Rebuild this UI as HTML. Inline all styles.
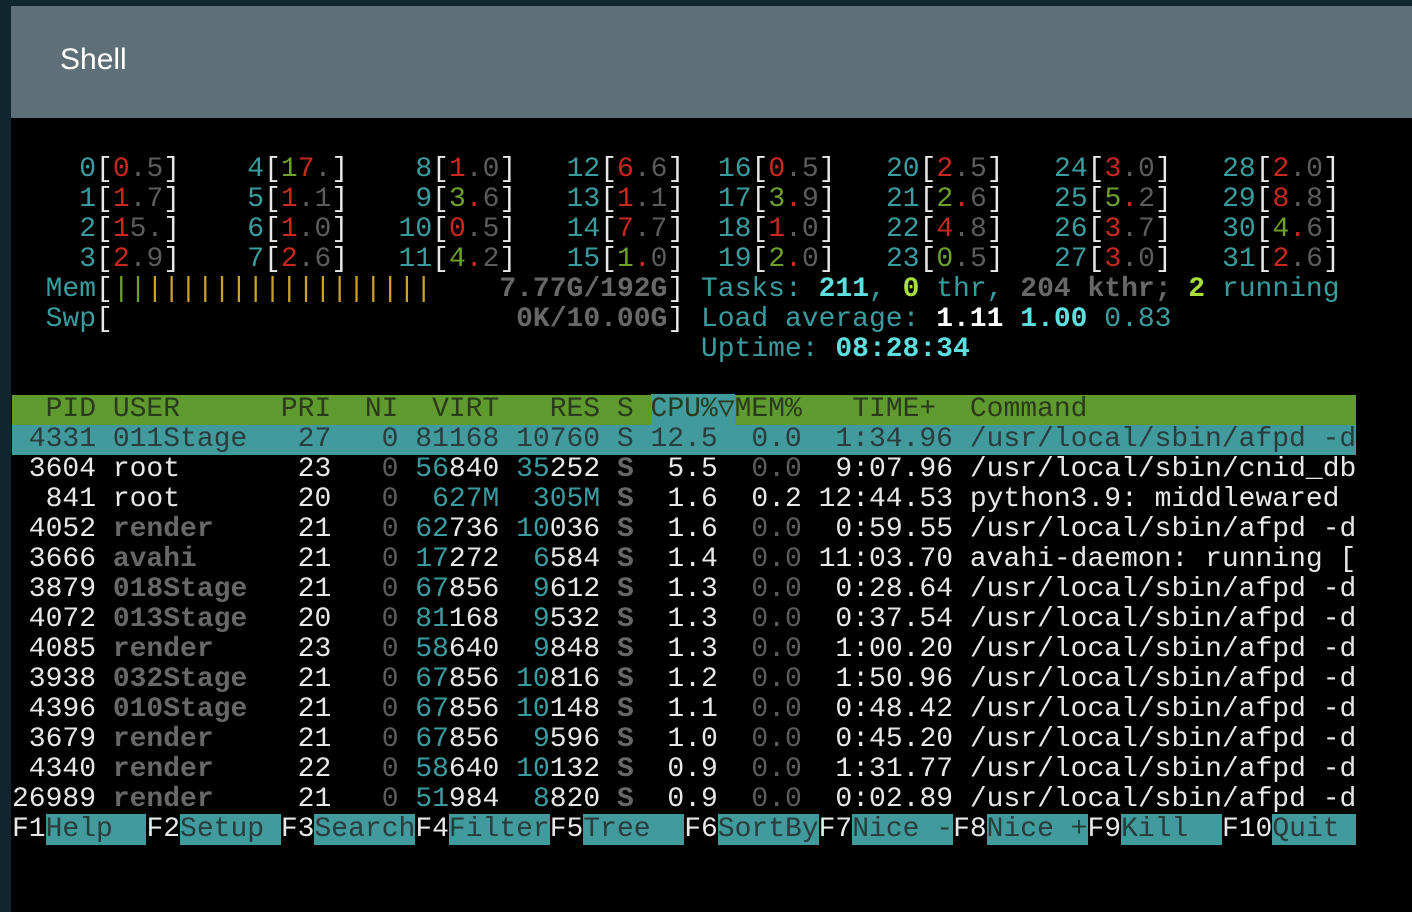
<!DOCTYPE html>
<html><head><meta charset="utf-8"><style>
*{margin:0;padding:0}
body{width:1412px;height:912px;background:#000;position:relative;overflow:hidden;font-family:"Liberation Sans",sans-serif}
#strip{position:absolute;left:0;top:0;width:11px;height:912px;background:#10262f}
#top{position:absolute;left:0;top:0;width:1412px;height:6px;background:#10262f}
#hdr{position:absolute;left:11px;top:6px;width:1401px;height:112px;background:#5f6f77}
#hdr span{position:absolute;left:49px;top:37px;color:#fff;font-size:30px;font-weight:500}
.l{position:absolute;left:12px;height:30px;line-height:30px;white-space:pre;font-family:"Liberation Mono",monospace;font-size:28px;color:#e8e8e8}
.w{color:#e8e8e8}.g{color:#5c5c5c}.gb{color:#686868;font-weight:bold}.t{color:#3b9ca0}.r{color:#c9281f}.G{color:#6ea12c}.y{color:#c8a02a}
.c{color:#5fe0e0;font-weight:bold}.lg{color:#a8e03a;font-weight:bold}.wb{color:#fff;font-weight:bold}
.hd{background:#5e9a2e;color:#2a3a1c;width:1344px}
.sel{background:#419a9b;color:#2a3c3e;width:1344px}
.cp{background:#419a9b}
.fk{background:#419a9b;color:#2a3c3e}
</style></head><body>
<div id="strip"></div><div id="top"></div>
<div id="hdr"><span>Shell</span></div>

<div class="l" style="top:155px">    <span class="t">0</span>[<span class="r">0</span><span class="g">.5</span>]    <span class="t">4</span>[<span class="G">1</span><span class="r">7</span><span class="g">.</span>]    <span class="t">8</span>[<span class="r">1</span><span class="g">.0</span>]   <span class="t">12</span>[<span class="r">6</span><span class="g">.6</span>]  <span class="t">16</span>[<span class="r">0</span><span class="g">.5</span>]   <span class="t">20</span>[<span class="r">2</span><span class="g">.5</span>]   <span class="t">24</span>[<span class="r">3</span><span class="g">.0</span>]   <span class="t">28</span>[<span class="r">2</span><span class="g">.0</span>]</div>
<div class="l" style="top:185px">    <span class="t">1</span>[<span class="r">1</span><span class="g">.7</span>]    <span class="t">5</span>[<span class="r">1</span><span class="g">.1</span>]    <span class="t">9</span>[<span class="G">3</span><span class="r">.</span><span class="g">6</span>]   <span class="t">13</span>[<span class="r">1</span><span class="g">.1</span>]  <span class="t">17</span>[<span class="G">3</span><span class="r">.</span><span class="g">9</span>]   <span class="t">21</span>[<span class="G">2</span><span class="r">.</span><span class="g">6</span>]   <span class="t">25</span>[<span class="G">5</span><span class="r">.</span><span class="g">2</span>]   <span class="t">29</span>[<span class="r">8</span><span class="g">.8</span>]</div>
<div class="l" style="top:215px">    <span class="t">2</span>[<span class="r">1</span><span class="g">5.</span>]    <span class="t">6</span>[<span class="r">1</span><span class="g">.0</span>]   <span class="t">10</span>[<span class="r">0</span><span class="g">.5</span>]   <span class="t">14</span>[<span class="r">7</span><span class="g">.7</span>]  <span class="t">18</span>[<span class="r">1</span><span class="g">.0</span>]   <span class="t">22</span>[<span class="r">4</span><span class="g">.8</span>]   <span class="t">26</span>[<span class="r">3</span><span class="g">.7</span>]   <span class="t">30</span>[<span class="G">4</span><span class="r">.</span><span class="g">6</span>]</div>
<div class="l" style="top:245px">    <span class="t">3</span>[<span class="r">2</span><span class="g">.9</span>]    <span class="t">7</span>[<span class="r">2</span><span class="g">.6</span>]   <span class="t">11</span>[<span class="G">4</span><span class="r">.</span><span class="g">2</span>]   <span class="t">15</span>[<span class="G">1</span><span class="r">.</span><span class="g">0</span>]  <span class="t">19</span>[<span class="G">2</span><span class="r">.</span><span class="g">0</span>]   <span class="t">23</span>[<span class="G">0</span><span class="g">.5</span>]   <span class="t">27</span>[<span class="r">3</span><span class="g">.0</span>]   <span class="t">31</span>[<span class="r">2</span><span class="g">.6</span>]</div>
<div class="l" style="top:275px">  <span class="t">Mem</span>[<span class="G">||</span><span class="y">|||||||||||||||||</span>    <span class="gb">7.77G/192G</span>] <span class="t">Tasks: </span><span class="c">211</span><span class="t">, </span><span class="lg">0</span><span class="t"> thr, </span><span class="gb">204 kthr; </span><span class="lg">2</span><span class="t"> running</span></div>
<div class="l" style="top:305px">  <span class="t">Swp</span>[                        <span class="gb">0K/10.00G</span>] <span class="t">Load average: </span><span class="wb">1.11</span> <span class="c">1.00</span> <span class="t">0.83</span></div>
<div class="l" style="top:335px">                                         <span class="t">Uptime: </span><span class="c">08:28:34</span></div>

<div class="l hd" style="top:395px">  PID USER      PRI  NI  VIRT   RES S <span class="cp">CPU%▽</span>MEM%   TIME+  Command</div>
<div class="l sel" style="top:425px"> 4331 011Stage   27   0 81168 10760 S 12.5  0.0  1:34.96 /usr/local/sbin/afpd -d</div>
<div class="l" style="top:455px"> 3604 root       23   <span class="g">0</span> <span class="t">56</span>840 <span class="t">35</span>252 <span class="gb">S</span>  5.5  <span class="g">0.0</span>  9:07.96 /usr/local/sbin/cnid_db</div>
<div class="l" style="top:485px">  841 root       20   <span class="g">0</span>  <span class="t">627M</span>  <span class="t">305M</span> <span class="gb">S</span>  1.6  0.2 12:44.53 python3.9: middlewared</div>
<div class="l" style="top:515px"> 4052 <span class="gb">render</span>     21   <span class="g">0</span> <span class="t">62</span>736 <span class="t">10</span>036 <span class="gb">S</span>  1.6  <span class="g">0.0</span>  0:59.55 /usr/local/sbin/afpd -d</div>
<div class="l" style="top:545px"> 3666 <span class="gb">avahi</span>      21   <span class="g">0</span> <span class="t">17</span>272  <span class="t">6</span>584 <span class="gb">S</span>  1.4  <span class="g">0.0</span> 11:03.70 avahi-daemon: running [</div>
<div class="l" style="top:575px"> 3879 <span class="gb">018Stage</span>   21   <span class="g">0</span> <span class="t">67</span>856  <span class="t">9</span>612 <span class="gb">S</span>  1.3  <span class="g">0.0</span>  0:28.64 /usr/local/sbin/afpd -d</div>
<div class="l" style="top:605px"> 4072 <span class="gb">013Stage</span>   20   <span class="g">0</span> <span class="t">81</span>168  <span class="t">9</span>532 <span class="gb">S</span>  1.3  <span class="g">0.0</span>  0:37.54 /usr/local/sbin/afpd -d</div>
<div class="l" style="top:635px"> 4085 <span class="gb">render</span>     23   <span class="g">0</span> <span class="t">58</span>640  <span class="t">9</span>848 <span class="gb">S</span>  1.3  <span class="g">0.0</span>  1:00.20 /usr/local/sbin/afpd -d</div>
<div class="l" style="top:665px"> 3938 <span class="gb">032Stage</span>   21   <span class="g">0</span> <span class="t">67</span>856 <span class="t">10</span>816 <span class="gb">S</span>  1.2  <span class="g">0.0</span>  1:50.96 /usr/local/sbin/afpd -d</div>
<div class="l" style="top:695px"> 4396 <span class="gb">010Stage</span>   21   <span class="g">0</span> <span class="t">67</span>856 <span class="t">10</span>148 <span class="gb">S</span>  1.1  <span class="g">0.0</span>  0:48.42 /usr/local/sbin/afpd -d</div>
<div class="l" style="top:725px"> 3679 <span class="gb">render</span>     21   <span class="g">0</span> <span class="t">67</span>856  <span class="t">9</span>596 <span class="gb">S</span>  1.0  <span class="g">0.0</span>  0:45.20 /usr/local/sbin/afpd -d</div>
<div class="l" style="top:755px"> 4340 <span class="gb">render</span>     22   <span class="g">0</span> <span class="t">58</span>640 <span class="t">10</span>132 <span class="gb">S</span>  0.9  <span class="g">0.0</span>  1:31.77 /usr/local/sbin/afpd -d</div>
<div class="l" style="top:785px">26989 <span class="gb">render</span>     21   <span class="g">0</span> <span class="t">51</span>984  <span class="t">8</span>820 <span class="gb">S</span>  0.9  <span class="g">0.0</span>  0:02.89 /usr/local/sbin/afpd -d</div>
<div class="l" style="top:815px">F1<span class="fk">Help  </span>F2<span class="fk">Setup </span>F3<span class="fk">Search</span>F4<span class="fk">Filter</span>F5<span class="fk">Tree  </span>F6<span class="fk">SortBy</span>F7<span class="fk">Nice -</span>F8<span class="fk">Nice +</span>F9<span class="fk">Kill  </span>F10<span class="fk">Quit </span></div>
</body></html>
